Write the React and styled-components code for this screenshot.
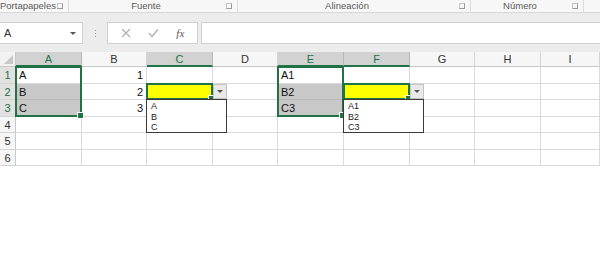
import React from "react";
import styled, { createGlobalStyle } from "styled-components";

const Global = createGlobalStyle`
  html, body { margin: 0; padding: 0; background: #ffffff; }
  body { font-family: "Liberation Sans", Arial, sans-serif; }
  #root { width: 600px; height: 276px; overflow: hidden; }
`;

const GREEN = "#217346";

const Page = styled.div`
  width: 600px;
  height: 276px;
  background: #ffffff;
  display: flex;
  flex-direction: column;
`;

const Ribbon = styled.div`
  height: 13px;
  display: flex;
  background: #f7f7f7;
  border-bottom: 1px solid #d8d8d8;
  box-sizing: border-box;
  overflow: hidden;
`;

const Group = styled.div`
  width: ${(p) => p.$w}px;
  flex: none;
  position: relative;
  display: flex;
  align-items: center;
  justify-content: ${(p) => (p.$left ? "flex-start" : "center")};
  padding-right: ${(p) => (p.$left ? 0 : 14)}px;
  box-sizing: border-box;
  border-right: 1px solid #dcdcdc;
  font-size: 9.5px;
  color: #5a5a5a;
  line-height: 12px;
  white-space: nowrap;
`;

const Label = styled.span`
  margin-left: ${(p) => p.$shift || 0}px;
`;

const Launcher = styled.span`
  position: absolute;
  right: 5px;
  top: 3px;
  width: 6px;
  height: 6px;
  border: 1px solid #9a9a9a;
  border-top-color: #c4c4c4;
  border-left-color: #c4c4c4;
  box-sizing: border-box;
`;

const Band = styled.div`
  height: 9px;
  background: #ececec;
`;

const FormulaBar = styled.div`
  height: 30px;
  background: #ececec;
  display: flex;
  align-items: flex-start;
  box-sizing: border-box;
`;

const NameBox = styled.div`
  width: 83px;
  height: 22px;
  background: #fff;
  border: 1px solid #d0d0d0;
  border-left: none;
  box-sizing: border-box;
  display: flex;
  align-items: center;
  justify-content: space-between;
  padding: 0 6px 0 4px;
  font-size: 11px;
  color: #333;
`;

const Caret = styled.span`
  width: 0;
  height: 0;
  border-left: 3px solid transparent;
  border-right: 3px solid transparent;
  border-top: 3px solid #555;
`;

const Dots = styled.div`
  width: 24px;
  height: 22px;
  display: flex;
  flex-direction: column;
  align-items: center;
  justify-content: center;
  gap: 2px;
  & > span {
    width: 1px;
    height: 1px;
    background: #a0a0a0;
  }
`;

const FxBox = styled.div`
  width: 91px;
  height: 22px;
  background: #fff;
  border: 1px solid #d0d0d0;
  box-sizing: border-box;
  display: flex;
  align-items: center;
  justify-content: space-around;
  padding: 0 4px;
`;

const FxText = styled.span`
  font-family: "Liberation Serif", serif;
  font-style: italic;
  font-size: 11px;
  color: #555;
`;

const Formula = styled.div`
  flex: 1;
  height: 22px;
  margin-left: 3px;
  background: #fff;
  border: 1px solid #d0d0d0;
  border-right: none;
  box-sizing: border-box;
`;

const Grid = styled.div`
  display: grid;
  grid-template-columns: 16px 66px 65px 66px 65px 66px 66px 65px 66px 59px;
  grid-template-rows: 15px 17px 16px 17px 16px 17px 16px;
  position: relative;
`;

const Corner = styled.div`
  grid-column: 1;
  grid-row: 1;
  background: #f2f2f2;
  border-right: 1px solid #c8c8c8;
  border-bottom: 1px solid #c8c8c8;
  box-sizing: border-box;
  position: relative;
  &::after {
    content: "";
    position: absolute;
    right: 2px;
    bottom: 2px;
    width: 0;
    height: 0;
    border-left: 9px solid transparent;
    border-bottom: 9px solid #c8c8c8;
  }
`;

const ColHead = styled.div`
  grid-row: 1;
  grid-column: ${(p) => p.$c};
  background: ${(p) => (p.$sel ? "#d2d2d2" : "#f6f6f6")};
  color: ${(p) => (p.$sel ? GREEN : "#333")};
  border-right: 1px solid ${(p) => (p.$sel ? "#b8b8b8" : "#d4d4d4")};
  border-bottom: ${(p) => (p.$sel ? `2px solid ${GREEN}` : "1px solid #c8c8c8")};
  box-sizing: border-box;
  font-size: 11px;
  display: flex;
  align-items: center;
  justify-content: center;
  padding-top: ${(p) => (p.$sel ? 1 : 0)}px;
`;

const RowHead = styled.div`
  grid-column: 1;
  grid-row: ${(p) => p.$r};
  background: ${(p) => (p.$sel ? "#e1e1e1" : "#f6f6f6")};
  color: ${(p) => (p.$sel ? GREEN : "#333")};
  border-right: 1px solid #c8c8c8;
  border-bottom: 1px solid #d4d4d4;
  box-sizing: border-box;
  font-size: 11px;
  display: flex;
  align-items: center;
  justify-content: center;
`;

const Cell = styled.div`
  grid-column: ${(p) => p.$c};
  grid-row: ${(p) => p.$r};
  background: ${(p) => p.$bg || "#fff"};
  border-right: 1px solid ${(p) => (p.$bg === "#c8c8c8" ? "#b9b9b9" : "#dadada")};
  border-bottom: 1px solid ${(p) => (p.$bg === "#c8c8c8" ? "#b9b9b9" : "#dadada")};
  box-sizing: border-box;
  font-size: 11px;
  color: #111;
  display: flex;
  align-items: center;
  justify-content: ${(p) => (p.$right ? "flex-end" : "flex-start")};
  padding: 0 3px 0 3px;
  position: relative;
`;

const Selection = styled.div`
  grid-column: ${(p) => p.$col} / span 1;
  grid-row: ${(p) => p.$row} / span ${(p) => p.$span};
  margin: -1px 0 0 -1px;
  border: 2px solid ${GREEN};
  box-sizing: border-box;
  pointer-events: none;
  position: relative;
  z-index: 2;
`;

const Handle = styled.span`
  position: absolute;
  right: -4px;
  bottom: -4px;
  width: 5px;
  height: 5px;
  background: ${GREEN};
  border: 1px solid #fff;
`;

const ArrowBtn = styled.div`
  position: absolute;
  left: calc(100% + 1px);
  top: 0px;
  width: 14px;
  height: 15px;
  background: #e9e9e9;
  border: 1px solid #c3c3c3;
  box-sizing: border-box;
  display: flex;
  align-items: center;
  justify-content: center;
  z-index: 3;
  &::after {
    content: "";
    width: 0;
    height: 0;
    border-left: 3px solid transparent;
    border-right: 3px solid transparent;
    border-top: 3px solid #555;
  }
`;

const List = styled.div`
  position: absolute;
  left: -1px;
  top: 100%;
  width: 81px;
  height: 34px;
  background: #fff;
  border: 1px solid #3a3a3a;
  box-sizing: border-box;
  display: flex;
  flex-direction: column;
  padding: 1px 0 0 4px;
  z-index: 4;
  font-size: 9px;
  line-height: 10.5px;
  color: #222;
`;

const cols = ["A", "B", "C", "D", "E", "F", "G", "H", "I"];
const selCols = { A: 1, C: 1, E: 1, F: 1 };

const GRAY = "#c8c8c8";
const YELLOW = "#ffff00";

const data = {
  1: { A: ["A"], B: ["1", "r"], E: ["A1"] },
  2: { A: ["B", "", GRAY], B: ["2", "r"], C: ["", "", YELLOW, "dd1"], E: ["B2", "", GRAY], F: ["", "", YELLOW, "dd2"] },
  3: { A: ["C", "", GRAY], B: ["3", "r"], E: ["C3", "", GRAY] },
};

const lists = { dd1: ["A", "B", "C"], dd2: ["A1", "B2", "C3"] };

export default function App() {
  const rows = [1, 2, 3, 4, 5, 6];
  return (
    <Page>
      <Global />
      <Ribbon>
        <Group $w={69} $left>
          <Label>Portapapeles</Label>
          <Launcher />
        </Group>
        <Group $w={169}>
          <Label>Fuente</Label>
          <Launcher />
        </Group>
        <Group $w={233}>
          <Label>Alineación</Label>
          <Launcher />
        </Group>
        <Group $w={113}>
          <Label>Número</Label>
          <Launcher />
        </Group>
      </Ribbon>
      <Band />
      <FormulaBar>
        <NameBox>
          A
          <Caret />
        </NameBox>
        <Dots>
          <span />
          <span />
          <span />
        </Dots>
        <FxBox>
          <svg width="10" height="10" viewBox="0 0 10 10">
            <path d="M1 1 L9 9 M9 1 L1 9" stroke="#b0b0b0" strokeWidth="1.2" fill="none" />
          </svg>
          <svg width="11" height="10" viewBox="0 0 11 10">
            <path d="M1 5 L4 8.5 L10 1.5" stroke="#b0b0b0" strokeWidth="1.3" fill="none" />
          </svg>
          <FxText>fx</FxText>
        </FxBox>
        <Formula />
      </FormulaBar>
      <Grid>
        <Corner />
        {cols.map((c, i) => (
          <ColHead key={c} $c={i + 2} $sel={!!selCols[c]}>
            {c}
          </ColHead>
        ))}
        <ColHead $c={11} />
        {rows.map((r) => (
          <React.Fragment key={r}>
            <RowHead $r={r + 1} $sel={r <= 3}>
              {r}
            </RowHead>
            {cols.map((c, i) => {
              const d = (data[r] && data[r][c]) || [""];
              const [text, align, bg, dd] = d;
              return (
                <Cell key={c} $c={i + 2} $r={r + 1} $right={align === "r"} $bg={bg}>
                  {text}
                  {dd && (
                    <>
                      <ArrowBtn />
                      <List>
                        {lists[dd].map((it) => (
                          <span key={it}>{it}</span>
                        ))}
                      </List>
                    </>
                  )}
                </Cell>
              );
            })}
            <Cell $c={11} $r={r + 1} />
          </React.Fragment>
        ))}
        <Selection $col={2} $row={2} $span={3}>
          <Handle />
        </Selection>
        <Selection $col={6} $row={2} $span={3}>
          <Handle />
        </Selection>
        <Selection $col={4} $row={3} $span={1}>
          <Handle />
        </Selection>
        <Selection $col={7} $row={3} $span={1}>
          <Handle />
        </Selection>
      </Grid>
    </Page>
  );
}
